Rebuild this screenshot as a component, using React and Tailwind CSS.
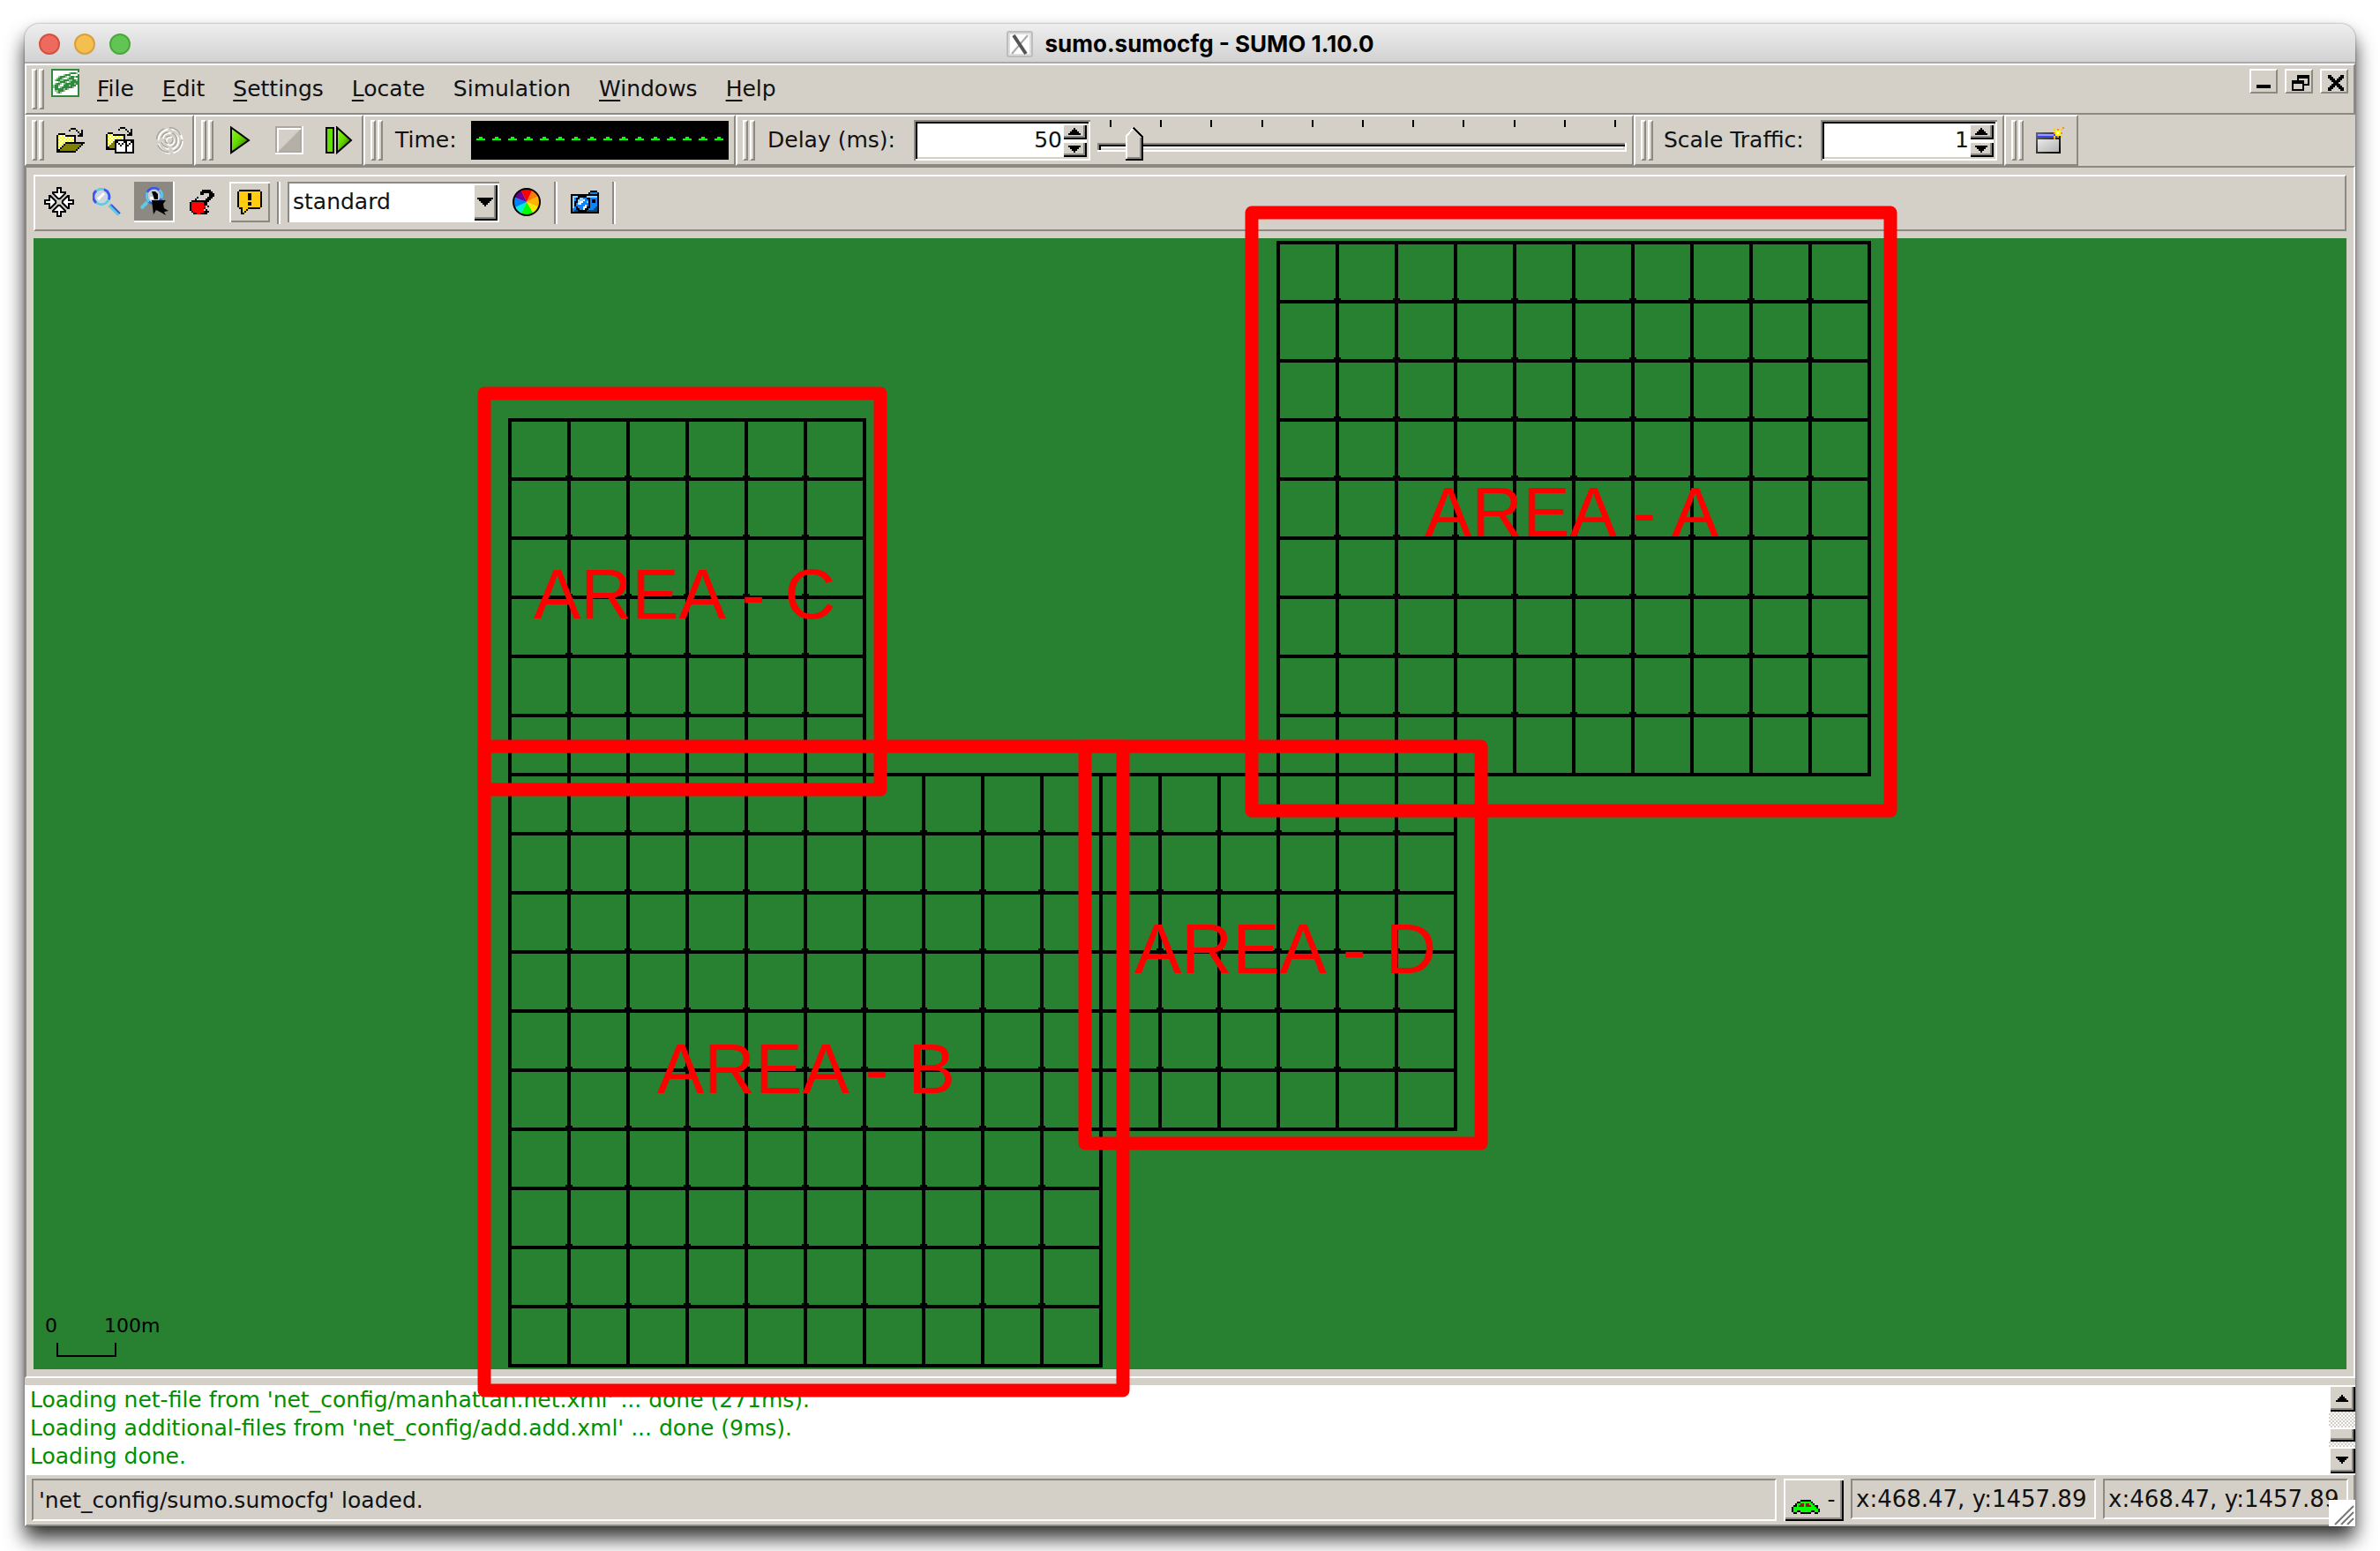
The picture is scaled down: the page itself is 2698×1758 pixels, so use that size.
import React from "react";

const PALETTE = {
  k: "#000000",
  w: "#ffffff",
  y: "#ffff00",
  d: "#808000",
  g: "#00ff00",
  m: "#8b1a1a",
  r: "#ff0000",
  b: "#0a84ff",
  l: "#8fd3ff",
  n: "#004c80",
  o: "#ff8c1a",
  a: "#ffcc10",
  s: "#2f8a3c",
  t: "#8fc496",
};

function PixelIcon({ rows, size = 2 }) {
  const cols = Math.max(...rows.map((r) => r.length));
  return (
    <svg
      width={cols * size}
      height={rows.length * size}
      viewBox={`0 0 ${cols} ${rows.length}`}
      shapeRendering="crispEdges"
      aria-hidden="true"
    >
      {rows.flatMap((row, y) =>
        [...row].map((c, x) =>
          PALETTE[c] ? <rect key={`${x}-${y}`} x={x} y={y} width="1" height="1" fill={PALETTE[c]} /> : null
        )
      )}
    </svg>
  );
}

const OPEN = [
  "........kkk.....",
  ".......k...k..k.",
  "............k.k.",
  ".kkkk........kk.",
  "kywywkkkkkkkkk..",
  "kwywywywywk.....",
  "kywywywywyk.....",
  "kwywywywywk.....",
  "kywywkkkkkkkkkkk",
  "kwywkdddddddddk.",
  "kywkdddddddddk..",
  "kwkdddddddddk...",
  "kkdddddddddk....",
  "kkkkkkkkkkk.....",
].map((row, i) => (i === 4 ? "kywywkkkkkk.kkk." : row));

const RELOAD = [
  "........kkk.....",
  ".......k...k..k.",
  "............k.k.",
  ".kkk.........kk.",
  "kwywkkkkkkk.kkk.",
  "kywywywywyk.....",
  "kwywywywywk.....",
  "kywywkkkkkkkkkkk",
  "kwywdkkwwwkkwwkk",
  "kywddkwkwkwkwkwk",
  "kwdddkwwkwwkkwwk",
  "kkdddkwwwwwkwwwk",
  "kkkkkkwwwwwkwwwk",
  ".....kwwwwwkwwwk",
  ".....kkkkkkkkkkk",
];

const LOGO = [
  "ssssssssssssssss",
  "swwwwwwwwwwwwwws",
  "swwwwwwwwwtssstw",
  "swwwwwwtssswwwws",
  "swwwtssstwtsstss",
  "swwtsstwwtssswws",
  "swtssttsssttssts",
  "swwwtssstwtsssss",
  "swtsstwtssssstss",
  "stsstwwssstsssws",
  "stsswtsssssstwws",
  "swssssststwwwwws",
  "swttssstwwwwwwws",
  "swwtstwwwwwwwwws",
  "swwwwwwwwwwwwwws",
  "ssssssssssssssss",
];

const CAMERA = [
  "...........kkkk.",
  "..........kbbbbk",
  "kkkkkkkkkkkkkkkk",
  "klllkkkkkllllllk",
  "klbkkllbbkkbbbbk",
  "klbklllwbbkbkkbk",
  "klkklwwbblkbkkbk",
  "klkbwwbbbbkbbbbk",
  "klkbbbbbwbkbbbbk",
  "klbkbbbwwkkbbbnk",
  "kbbkkbbwkkbbbnnk",
  "kbnnkkkkknnnnnnk",
  "kkkkkkkkkkkkkkkk",
];

const CAR = [
  ".....kkkkkk.....",
  "...kkggggggk....",
  "..kggmmgmmggk...",
  ".kkgmmmgmmmggkk.",
  "kgggggggggggggk.",
  "kggggggggggggggk",
  "kggkkggggggkkggk",
  ".kk..kkkkkk..kk.",
];

const APPLE = [
  ".......kkkkk..",
  "......kkkkkkk.",
  "......kk...kkk",
  "...........kkk",
  "....k.....kkk.",
  "...k.....kkk..",
  ".kkkkkkkkkk...",
  "krrrrrrrkk....",
  "krrrrrrrkk....",
  "krrrrrrrr.k...",
  "krrrrrrrk.....",
  "krrrrrrr.k....",
  ".krrrrrrkkk...",
  "..kkrrkkkk....",
];

const BUBBLE = [
  ".kkkkkkkkkkkk.",
  "kaaaaaaaaaaaak",
  "kaaaaakkaaaaak",
  "kaaaaakkaaaaak",
  "kaaaaakkaaaaak",
  "kaaaaakkaaaaak",
  "kaaaaaaaaaaaak",
  "kaaaaakkaaaaak",
  "kaaaaakkaaaaak",
  "kaaaaaaaaaaaak",
  ".kkaaakkkkkkk.",
  "..kaak........",
  "..kak.........",
  "..kk..........",
];

const SPARK = [
  ".....o",
  "a.o.a.",
  ".yyy..",
  "oywyo.",
  ".yyy..",
  "a.o.a.",
  "o.....",
];

const RESTORE = [
  "...kkkkkkk",
  "...kkkkkkk",
  "...k.....k",
  "kkkkkkk..k",
  "kkkkkkk..k",
  "k.....kkkk",
  "k.....k...",
  "k.....k...",
  "kkkkkkk...",
];

const CLOSE = [
  "kk.....kk",
  "kkk...kkk",
  ".kkk.kkk.",
  "..kkkkk..",
  "...kkk...",
  "..kkkkk..",
  ".kkk.kkk.",
  "kkk...kkk",
  "kk.....kk",
];

const UP = ["...k...", "..kkk..", ".kkkkk.", "kkkkkkk"];
const DOWN = [...UP].reverse();

function Swirl() {
  return (
    <svg width="32" height="32" viewBox="0 0 16 16" fill="none" aria-hidden="true">
      <g stroke="#fff" strokeWidth="1">
        <circle cx="8.5" cy="8.5" r="6.9" strokeDasharray="9 2" />
        <circle cx="8.5" cy="8.5" r="4.6" strokeDasharray="6 2" />
        <circle cx="8.5" cy="8.5" r="2.2" />
      </g>
      <g stroke="#aca8a0" strokeWidth="0.8">
        <circle cx="7.8" cy="7.8" r="7" strokeDasharray="8 3" />
        <circle cx="7.8" cy="7.8" r="4.4" strokeDasharray="5 2.5" />
        <circle cx="7.8" cy="7.8" r="2.2" strokeDasharray="3 1" />
      </g>
    </svg>
  );
}

function GreenGradient({ id }) {
  return (
    <defs>
      <linearGradient id={id} x1="0" y1="0" x2="1" y2="1">
        <stop offset="0" stopColor="#8cff1a" />
        <stop offset="0.45" stopColor="#66d900" />
        <stop offset="1" stopColor="#1f5200" />
      </linearGradient>
    </defs>
  );
}

function Play() {
  return (
    <svg width="24" height="32" viewBox="0 0 24 32" aria-hidden="true">
      <GreenGradient id="play" />
      <path d="M2 1.5 L22 16 L2 30 Z" fill="url(#play)" stroke="#000" strokeWidth="2" />
    </svg>
  );
}

function Stop() {
  return (
    <svg width="32" height="32" viewBox="0 0 32 32" aria-hidden="true">
      <path d="M28 4 V28 H4 Z" fill="#b4b0a8" />
      <path d="M1 31 V1 H29 V29 H3" fill="none" stroke="#aca8a0" strokeWidth="2" />
      <path d="M3 29 V3 H29 M31 0 V31 H0" fill="none" stroke="#fff" strokeWidth="2" />
    </svg>
  );
}

function Step() {
  return (
    <svg width="32" height="32" viewBox="0 0 32 32" aria-hidden="true">
      <GreenGradient id="step" />
      <rect x="2" y="2" width="8" height="28" fill="#5fe000" stroke="#000" strokeWidth="2" />
      <path d="M14 1.5 L30 16 L14 30 Z" fill="url(#step)" stroke="#000" strokeWidth="2" />
    </svg>
  );
}

function Move() {
  return (
    <svg width="34" height="34" viewBox="0 0 17 17" aria-hidden="true">
      {[0, 90, 180, 270].map((r) => (
        <path
          key={r}
          d="M7.5 .5h2v2.5h2.5v.6l-3 3h-1l-3-3v-.6h2.5z"
          transform={`rotate(${r} 8.5 8.5)`}
          fill="#fff"
          stroke="#000"
        />
      ))}
    </svg>
  );
}

function Magnifier() {
  return (
    <svg width="32" height="32" viewBox="0 0 16 16" aria-hidden="true">
      <path d="M9.5 9.5 L15 15" stroke="#5ccbe6" strokeWidth="2.4" />
      <path d="M10.5 9.5 L15.5 14.5" stroke="#3f55e8" strokeWidth="1" />
      <circle cx="5" cy="5" r="4.4" fill="#d0d4dc" stroke="#5ccbe6" strokeWidth="1.4" />
      <path d="M2 1.6 A4.4 4.4 0 0 0 2 8.4 M6.5 .9 A4.4 4.4 0 0 1 9.2 6.6" fill="none" stroke="#3f55e8" strokeWidth="1.4" />
      <path d="M3 6.5 L6.5 3" stroke="#fff" strokeWidth="1.5" />
    </svg>
  );
}

function MagnifierPick() {
  return (
    <svg width="32" height="34" viewBox="0 0 16 17" aria-hidden="true">
      <path d="M4 8.5 L.5 12" stroke="#5ccbe6" strokeWidth="2" />
      <circle cx="7.8" cy="5" r="4.4" fill="#c8ccd4" stroke="#3f55e8" strokeWidth="1.4" />
      <path d="M4 3 A4.4 4.4 0 0 0 5 8.3 M10.8 1.6 A4.4 4.4 0 0 1 12 6.5" fill="none" stroke="#5ccbe6" strokeWidth="1.4" />
      <path d="M6.5 2.5 h2 l1.5 1.5 v3 h-2 z" fill="#000" />
      <path d="M5.5 5.5 h2 v1.5 h-2 z" fill="#fff" />
      <path d="M6.5 7.5 H14.5 L13 9.5 L13.5 12 L16 13.5 L13.5 14 L14.5 16 L12 14.5 L9 13 L7.5 15.5 Z" fill="#000" />
    </svg>
  );
}

function ColorWheel() {
  const slices = ["#ff0000", "#ff7a00", "#ffb400", "#ffe600", "#00ff00", "#00f0d0", "#0080ff", "#6a0096"];
  const bounds = [-25, 25, 62, 112, 150, 205, 245, 292, 335];
  const at = (deg) => {
    const a = ((deg - 90) * Math.PI) / 180;
    return `${16 + 15 * Math.cos(a)} ${16 + 15 * Math.sin(a)}`;
  };
  return (
    <svg width="32" height="32" viewBox="0 0 32 32" aria-hidden="true">
      {slices.map((c, i) => (
        <path key={c} d={`M16 16 L${at(bounds[i])} A15 15 0 0 1 ${at(bounds[i + 1])} Z`} fill={c} />
      ))}
      <circle cx="16" cy="16" r="15" fill="none" stroke="#000" strokeWidth="2" />
    </svg>
  );
}

function NewView() {
  return (
    <span className="relative block">
      <svg width="32" height="30" viewBox="0 0 32 30" aria-hidden="true">
        <defs>
          <linearGradient id="pane" x1="0" y1="0" x2="1" y2="1">
            <stop offset="0" stopColor="#e8e8e8" />
            <stop offset="1" stopColor="#b4b4b4" />
          </linearGradient>
          <linearGradient id="rim" x1="0" y1="0" x2="1" y2="1">
            <stop offset="0" stopColor="#666" />
            <stop offset="1" stopColor="#000" />
          </linearGradient>
        </defs>
        <rect x="0" y="6" width="28" height="24" fill="url(#rim)" />
        <rect x="2" y="8" width="24" height="4" fill="#3b45f0" />
        <rect x="2" y="8" width="18" height="2" fill="#9a9cf8" />
        <rect x="2" y="14" width="24" height="14" fill="url(#pane)" />
      </svg>
      <span className="absolute top-0 left-5">
        <PixelIcon rows={SPARK} />
      </span>
    </span>
  );
}

function Grip() {
  return (
    <div className="flex h-[46px] shrink-0 gap-[2px]" aria-hidden="true">
      <div className="w-[6px] border-2 border-t-white border-r-[#8b8982] border-b-[#8b8982] border-l-white" />
      <div className="w-[6px] border-2 border-t-white border-r-[#8b8982] border-b-[#8b8982] border-l-white" />
    </div>
  );
}

function Bar({ children }) {
  return (
    <div className="flex h-[58px] shrink-0 items-center border-2 border-t-white border-r-[#8b8982] border-b-[#8b8982] border-l-white pl-[6px]">
      <Grip />
      {children}
    </div>
  );
}

function ToolButton({ label, children }) {
  return (
    <button type="button" aria-label={label} className="flex h-[46px] w-14 items-center justify-center pl-1">
      {children}
    </button>
  );
}

function ViewButton({ label, look = "", children }) {
  return (
    <button type="button" aria-label={label} className={`flex h-[46px] w-[46px] items-center justify-center ${look}`}>
      {children}
    </button>
  );
}

const RAISED = "bg-[#d4d0c8] shadow-[inset_2px_2px_#fff,inset_-2px_-2px_#000,inset_-4px_-4px_#8b8982]";
const SUNKEN =
  "shadow-[inset_2px_2px_#8b8982,inset_-2px_-2px_#fff,inset_4px_4px_#000,inset_-4px_-4px_#d4d0c8]";

function Spinner({ id, value }) {
  return (
    <div className={`flex h-[46px] w-[200px] bg-white p-1 ${SUNKEN}`}>
      <input id={id} defaultValue={value} className="min-w-0 flex-1 bg-transparent text-right outline-none" />
      <div className="flex w-7 flex-col gap-[2px]">
        <button type="button" aria-label="Increase" className={`flex flex-1 items-center justify-center ${RAISED}`}>
          <PixelIcon rows={UP} />
        </button>
        <button type="button" aria-label="Decrease" className={`flex flex-1 items-center justify-center ${RAISED}`}>
          <PixelIcon rows={DOWN} />
        </button>
      </div>
    </div>
  );
}

function DelaySlider() {
  return (
    <div className="relative h-[46px] w-[600px]">
      <svg className="absolute inset-0" width="600" height="46" viewBox="0 0 600 46" shapeRendering="crispEdges" aria-hidden="true">
        {Array.from({ length: 11 }, (_, i) => (
          <rect key={i} x={14 + Math.round(i * 57.2)} y="0" width="2" height="8" fill="#000" />
        ))}
        <rect x="0" y="26" width="600" height="10" fill="#fff" />
        <rect x="0" y="26" width="598" height="8" fill="#8b8982" />
        <rect x="2" y="28" width="596" height="6" fill="#000" />
        <rect x="4" y="30" width="594" height="4" fill="#d4d0c8" />
        <rect x="4" y="30" width="592" height="2" fill="#fff" />
        <path d="M32 46 V18 L41 8 L52 18 V46 Z" fill="#d4d0c8" />
        <path d="M33 44 V18 L41 9" fill="none" stroke="#fff" strokeWidth="2" />
        <path d="M49 20 V43 H34" fill="none" stroke="#8b8982" strokeWidth="2" />
        <path d="M41 9 L51 19 V45 H32" fill="none" stroke="#000" strokeWidth="2" />
      </svg>
      <input
        type="range"
        min="0"
        max="1000"
        defaultValue="50"
        aria-label="Delay slider"
        className="absolute inset-0 h-full w-full cursor-pointer opacity-0"
      />
    </div>
  );
}

const DASHES = Array.from({ length: 16 }, (_, i) => i);

const MENUS = [
  ["F", "ile"],
  ["E", "dit"],
  ["S", "ettings"],
  ["L", "ocate"],
  ["", "Simulation"],
  ["W", "indows"],
  ["H", "elp"],
];

/* Street grid: columns and rows are counted in 67-unit blocks from the top left corner of area C. */
const BLOCK = 67;
const X0 = 578;
const Y0 = 476;
const GRIDS = [
  { c0: 0, c1: 6, r0: 0, r1: 6 },
  { c0: 0, c1: 10, r0: 6, r1: 16 },
  { c0: 10, c1: 16, r0: 6, r1: 12 },
  { c0: 13, c1: 23, r0: -3, r1: 6 },
];

const AREAS = [
  { name: "AREA - A", x: 1419, y: 241, w: 724, h: 678, tx: 1615, ty: 608 },
  { name: "AREA - B", x: 549, y: 846, w: 724, h: 730, tx: 745, ty: 1239 },
  { name: "AREA - C", x: 549, y: 446, w: 449, h: 449, tx: 605, ty: 701 },
  { name: "AREA - D", x: 1230, y: 846, w: 449, h: 450, tx: 1286, ty: 1103 },
];

const range = (a, b) => Array.from({ length: b - a + 1 }, (_, i) => a + i);

function Network() {
  return (
    <svg
      className="pointer-events-none absolute inset-0 z-10 h-full w-full overflow-visible"
      viewBox="38 270 2622 1282"
      role="img"
      aria-label="Road network with four areas"
    >
      <g shapeRendering="crispEdges">
        {GRIDS.map((g, n) => {
          const left = X0 + g.c0 * BLOCK;
          const right = X0 + g.c1 * BLOCK;
          const top = Y0 + g.r0 * BLOCK;
          const bottom = Y0 + g.r1 * BLOCK;
          return (
            <g key={n}>
              {range(g.c0, g.c1).map((c) => (
                <rect key={`c${c}`} x={X0 + c * BLOCK - 2} y={top - 2} width="4" height={bottom - top + 4} />
              ))}
              {range(g.r0, g.r1).map((r) => (
                <rect key={`r${r}`} x={left - 2} y={Y0 + r * BLOCK - 2} width={right - left + 4} height="4" />
              ))}
              {range(g.c0 + 1, g.c1 - 1).flatMap((c) =>
                range(g.r0 + 1, g.r1 - 1).map((r) => (
                  <path
                    key={`n${c}-${r}`}
                    d={`M${X0 + c * BLOCK - 4} ${Y0 + r * BLOCK - 4}h8v6h-2v2h-4v-2h-2z`}
                  />
                ))
              )}
            </g>
          );
        })}
      </g>
      <g fontFamily="'DejaVu Sans', sans-serif" fontSize="22">
        <text x="51" y="1510">0</text>
        <text x="118" y="1510">100m</text>
      </g>
      <path d="M65 1522 V1537 H131 V1522" fill="none" stroke="#000" strokeWidth="2" />
      {AREAS.map((a) => (
        <g key={a.name}>
          <rect x={a.x} y={a.y} width={a.w} height={a.h} fill="none" stroke="#ff0000" strokeWidth="15" strokeLinejoin="round" />
          <text x={a.tx} y={a.ty} fill="#ff0000" fontFamily="'Liberation Sans', Arial, sans-serif" fontSize="80">
            {a.name}
          </text>
        </g>
      ))}
    </svg>
  );
}

export default function App() {
  return (
    <div className="flex min-h-screen flex-col bg-white px-7 pt-[27px] pb-7 font-['DejaVu_Sans',sans-serif] text-[25px] leading-8 text-[#111]">
      <div className="relative flex flex-1 flex-col rounded-t-[16px] bg-[#d4d0c8] shadow-[0_14px_22px_rgba(0,0,0,0.8),0_0_2px_rgba(0,0,0,0.5)]">
        <header className="relative flex h-[45px] items-center justify-center rounded-t-[16px] border-b-2 border-[#a9a9a9] bg-linear-to-b from-[#eeeeee] to-[#d2d2d2] pt-[3px]">
          <div className="absolute left-4 flex gap-4">
            <button type="button" aria-label="Close" className="h-6 w-6 rounded-full border-2 border-[#d5503f] bg-[#ed6a5e]" />
            <button type="button" aria-label="Minimize" className="h-6 w-6 rounded-full border-2 border-[#d8a03c] bg-[#f5bf4f]" />
            <button type="button" aria-label="Zoom" className="h-6 w-6 rounded-full border-2 border-[#4ba73a] bg-[#61c554]" />
          </div>
          <div className="flex items-center gap-[14px]">
            <svg width="30" height="30" viewBox="0 0 30 30" aria-hidden="true">
              <rect x="1" y="1" width="28" height="28" rx="2" fill="#ddd" stroke="#bdbdbd" strokeWidth="2" />
              <rect x="4" y="4" width="22" height="22" fill="#fff" />
              <path d="M24 5 L6 26" stroke="#aaa" strokeWidth="2" />
              <path d="M8 5 L22 26" stroke="#555" strokeWidth="4" />
            </svg>
            <h1 className="font-['Inter',sans-serif] text-[26px] font-bold text-black">sumo.sumocfg - SUMO 1.10.0</h1>
          </div>
        </header>

        <nav className="flex h-[58px] items-start border-2 border-t-white border-r-[#8b8982] border-b-[#8b8982] border-l-white pt-1 pr-[6px] pl-[6px]">
          <Grip />
          <span className="mr-1 ml-2">
            <PixelIcon rows={LOGO} />
          </span>
          {MENUS.map(([key, rest]) => (
            <button key={rest} type="button" className="h-[46px] px-4">
              <span className="underline decoration-2 underline-offset-[4px]">{key}</span>
              {rest}
            </button>
          ))}
          <div className="ml-auto flex gap-2">
            <button type="button" aria-label="Minimize view" className="flex h-7 w-8 items-end justify-center border-2 border-t-white border-r-[#8b8982] border-b-[#8b8982] border-l-white pb-1">
              <span className="block h-1 w-4 bg-black" />
            </button>
            <button type="button" aria-label="Restore view" className="flex h-7 w-8 items-center justify-center border-2 border-t-white border-r-[#8b8982] border-b-[#8b8982] border-l-white pt-1 pl-1">
              <PixelIcon rows={RESTORE} />
            </button>
            <button type="button" aria-label="Close view" className="flex h-7 w-8 items-center justify-center border-2 border-t-white border-r-[#8b8982] border-b-[#8b8982] border-l-white pt-1 pl-1">
              <PixelIcon rows={CLOSE} />
            </button>
          </div>
        </nav>

        <div className="flex h-[58px]">
          <Bar>
            <ToolButton label="Open simulation"><PixelIcon rows={OPEN} /></ToolButton>
            <ToolButton label="Open network"><PixelIcon rows={RELOAD} /></ToolButton>
            <ToolButton label="Reload"><Swirl /></ToolButton>
          </Bar>
          <Bar>
            <ToolButton label="Run"><Play /></ToolButton>
            <ToolButton label="Stop"><Stop /></ToolButton>
            <ToolButton label="Step"><Step /></ToolButton>
          </Bar>
          <Bar>
            <span className="w-[100px] pl-[14px]">Time:</span>
            <div className="mr-[6px] flex h-11 w-[292px] items-start gap-2 bg-black pt-[18px] pl-[6px]" role="img" aria-label="No simulation time">
              {DASHES.map((i) => (
                <span key={i} className="flex h-1 w-[10px] flex-col items-center">
                  <span className="h-[2px] w-1 bg-[#00ff00]" />
                  <span className="h-[2px] w-[10px] bg-[#00ff00]" />
                </span>
              ))}
            </div>
          </Bar>
          <Bar>
            <label htmlFor="delay" className="w-[180px] pl-[14px]">Delay (ms):</label>
            <Spinner id="delay" value="50" />
            <div className="mr-[6px] ml-2">
              <DelaySlider />
            </div>
          </Bar>
          <Bar>
            <label htmlFor="scale" className="w-[190px] pl-3">Scale Traffic:</label>
            <div className="mr-[6px]">
              <Spinner id="scale" value="1" />
            </div>
          </Bar>
          <Bar>
            <button type="button" aria-label="New view" className="flex h-[46px] w-[60px] items-center justify-center">
              <NewView />
            </button>
          </Bar>
        </div>

        <main className="flex flex-1 flex-col gap-2 border-2 border-t-[#8b8982] border-r-white border-b-white border-l-[#8b8982] p-2">
          <div className="flex h-16 items-start gap-2 border-2 border-t-white border-r-[#8b8982] border-b-[#8b8982] border-l-white px-1 pt-[6px]">
            <ViewButton label="Recenter view"><Move /></ViewButton>
            <ViewButton label="Edit viewport"><Magnifier /></ViewButton>
            <ViewButton label="Toggle zoom style" look="bg-[#8b8982] shadow-[inset_-2px_-2px_#fff]"><MagnifierPick /></ViewButton>
            <ViewButton label="Locate"><PixelIcon rows={APPLE} /></ViewButton>
            <ViewButton label="Toggle tooltips" look="shadow-[inset_2px_2px_#fff,inset_-2px_-2px_#8b8982]"><PixelIcon rows={BUBBLE} /></ViewButton>
            <span className="h-12 w-1 border-r-2 border-l-2 border-r-white border-l-[#8b8982]" />
            <div className="relative h-[46px] w-[240px] bg-white shadow-[inset_2px_2px_#8b8982,inset_-2px_-2px_#fff]">
              <select aria-label="Colour scheme" className="h-full w-full appearance-none bg-transparent pr-8 pl-[6px] outline-none">
                <option>standard</option>
              </select>
              <span className={`pointer-events-none absolute top-[2px] right-[2px] flex h-[42px] w-7 items-center justify-center ${RAISED}`}>
                <PixelIcon rows={["kkkkkkkkk", ".kkkkkkk.", "..kkkkk..", "...kkk...", "....k...."]} />
              </span>
            </div>
            <ViewButton label="Edit colouring"><ColorWheel /></ViewButton>
            <span className="h-12 w-1 border-r-2 border-l-2 border-r-white border-l-[#8b8982]" />
            <ViewButton label="Make snapshot"><PixelIcon rows={CAMERA} /></ViewButton>
            <span className="h-12 w-1 border-r-2 border-l-2 border-r-white border-l-[#8b8982]" />
          </div>
          <div className="relative flex-1 bg-[#288031]">
            <Network />
          </div>
        </main>

        <section className="mt-2 flex h-[102px] bg-white text-[#009000]">
          <div className="flex-1 pt-px pl-[6px]">
            <p>Loading net-file from 'net_config/manhattan.net.xml' ... done (271ms).</p>
            <p>Loading additional-files from 'net_config/add.add.xml' ... done (9ms).</p>
            <p>Loading done.</p>
          </div>
          <div className="flex h-[100px] w-[30px] flex-col bg-[repeating-conic-gradient(#fff_0_25%,#d4d0c8_0_50%)] bg-[length:4px_4px]">
            <button type="button" aria-label="Scroll up" className={`flex h-[30px] items-center justify-center ${RAISED}`}>
              <PixelIcon rows={UP} />
            </button>
            <div className={`mt-[18px] mb-auto h-4 ${RAISED}`} />
            <button type="button" aria-label="Scroll down" className={`flex h-[30px] items-center justify-center ${RAISED}`}>
              <PixelIcon rows={DOWN} />
            </button>
          </div>
        </section>

        <footer className="relative flex h-[58px] gap-2 border-r-2 border-b-2 border-l-2 border-r-[#8b8982] border-b-[#8b8982] border-l-white px-[6px] pt-1">
          <p className="flex h-12 flex-1 items-center border-2 border-t-[#8b8982] border-r-white border-b-white border-l-[#8b8982] pt-[2px] pl-[6px]">
            'net_config/sumo.sumocfg' loaded.
          </p>
          <button type="button" aria-label="Vehicles" className={`flex h-12 w-[68px] items-center justify-center gap-2 ${RAISED}`}>
            <span className="pt-4">
              <PixelIcon rows={CAR} />
            </span>
            <span>-</span>
          </button>
          <p className="flex h-[46px] w-[278px] items-center border-2 border-t-[#8b8982] border-r-white border-b-white border-l-[#8b8982] pl-1 text-[26px] whitespace-nowrap">
            x:468.47, y:1457.89
          </p>
          <p className="flex h-[46px] w-[278px] items-center border-2 border-t-[#8b8982] border-r-white border-b-white border-l-[#8b8982] pl-1 text-[26px] whitespace-nowrap">
            x:468.47, y:1457.89
          </p>
          <svg className="absolute -right-[2px] -bottom-[2px]" width="30" height="30" viewBox="0 0 30 30" aria-hidden="true">
            <rect width="30" height="30" fill="#fff" />
            <path d="M7 28 L28 7 M14 28 L28 14 M21 28 L28 21" stroke="#777" strokeWidth="2" />
          </svg>
        </footer>
      </div>
    </div>
  );
}
